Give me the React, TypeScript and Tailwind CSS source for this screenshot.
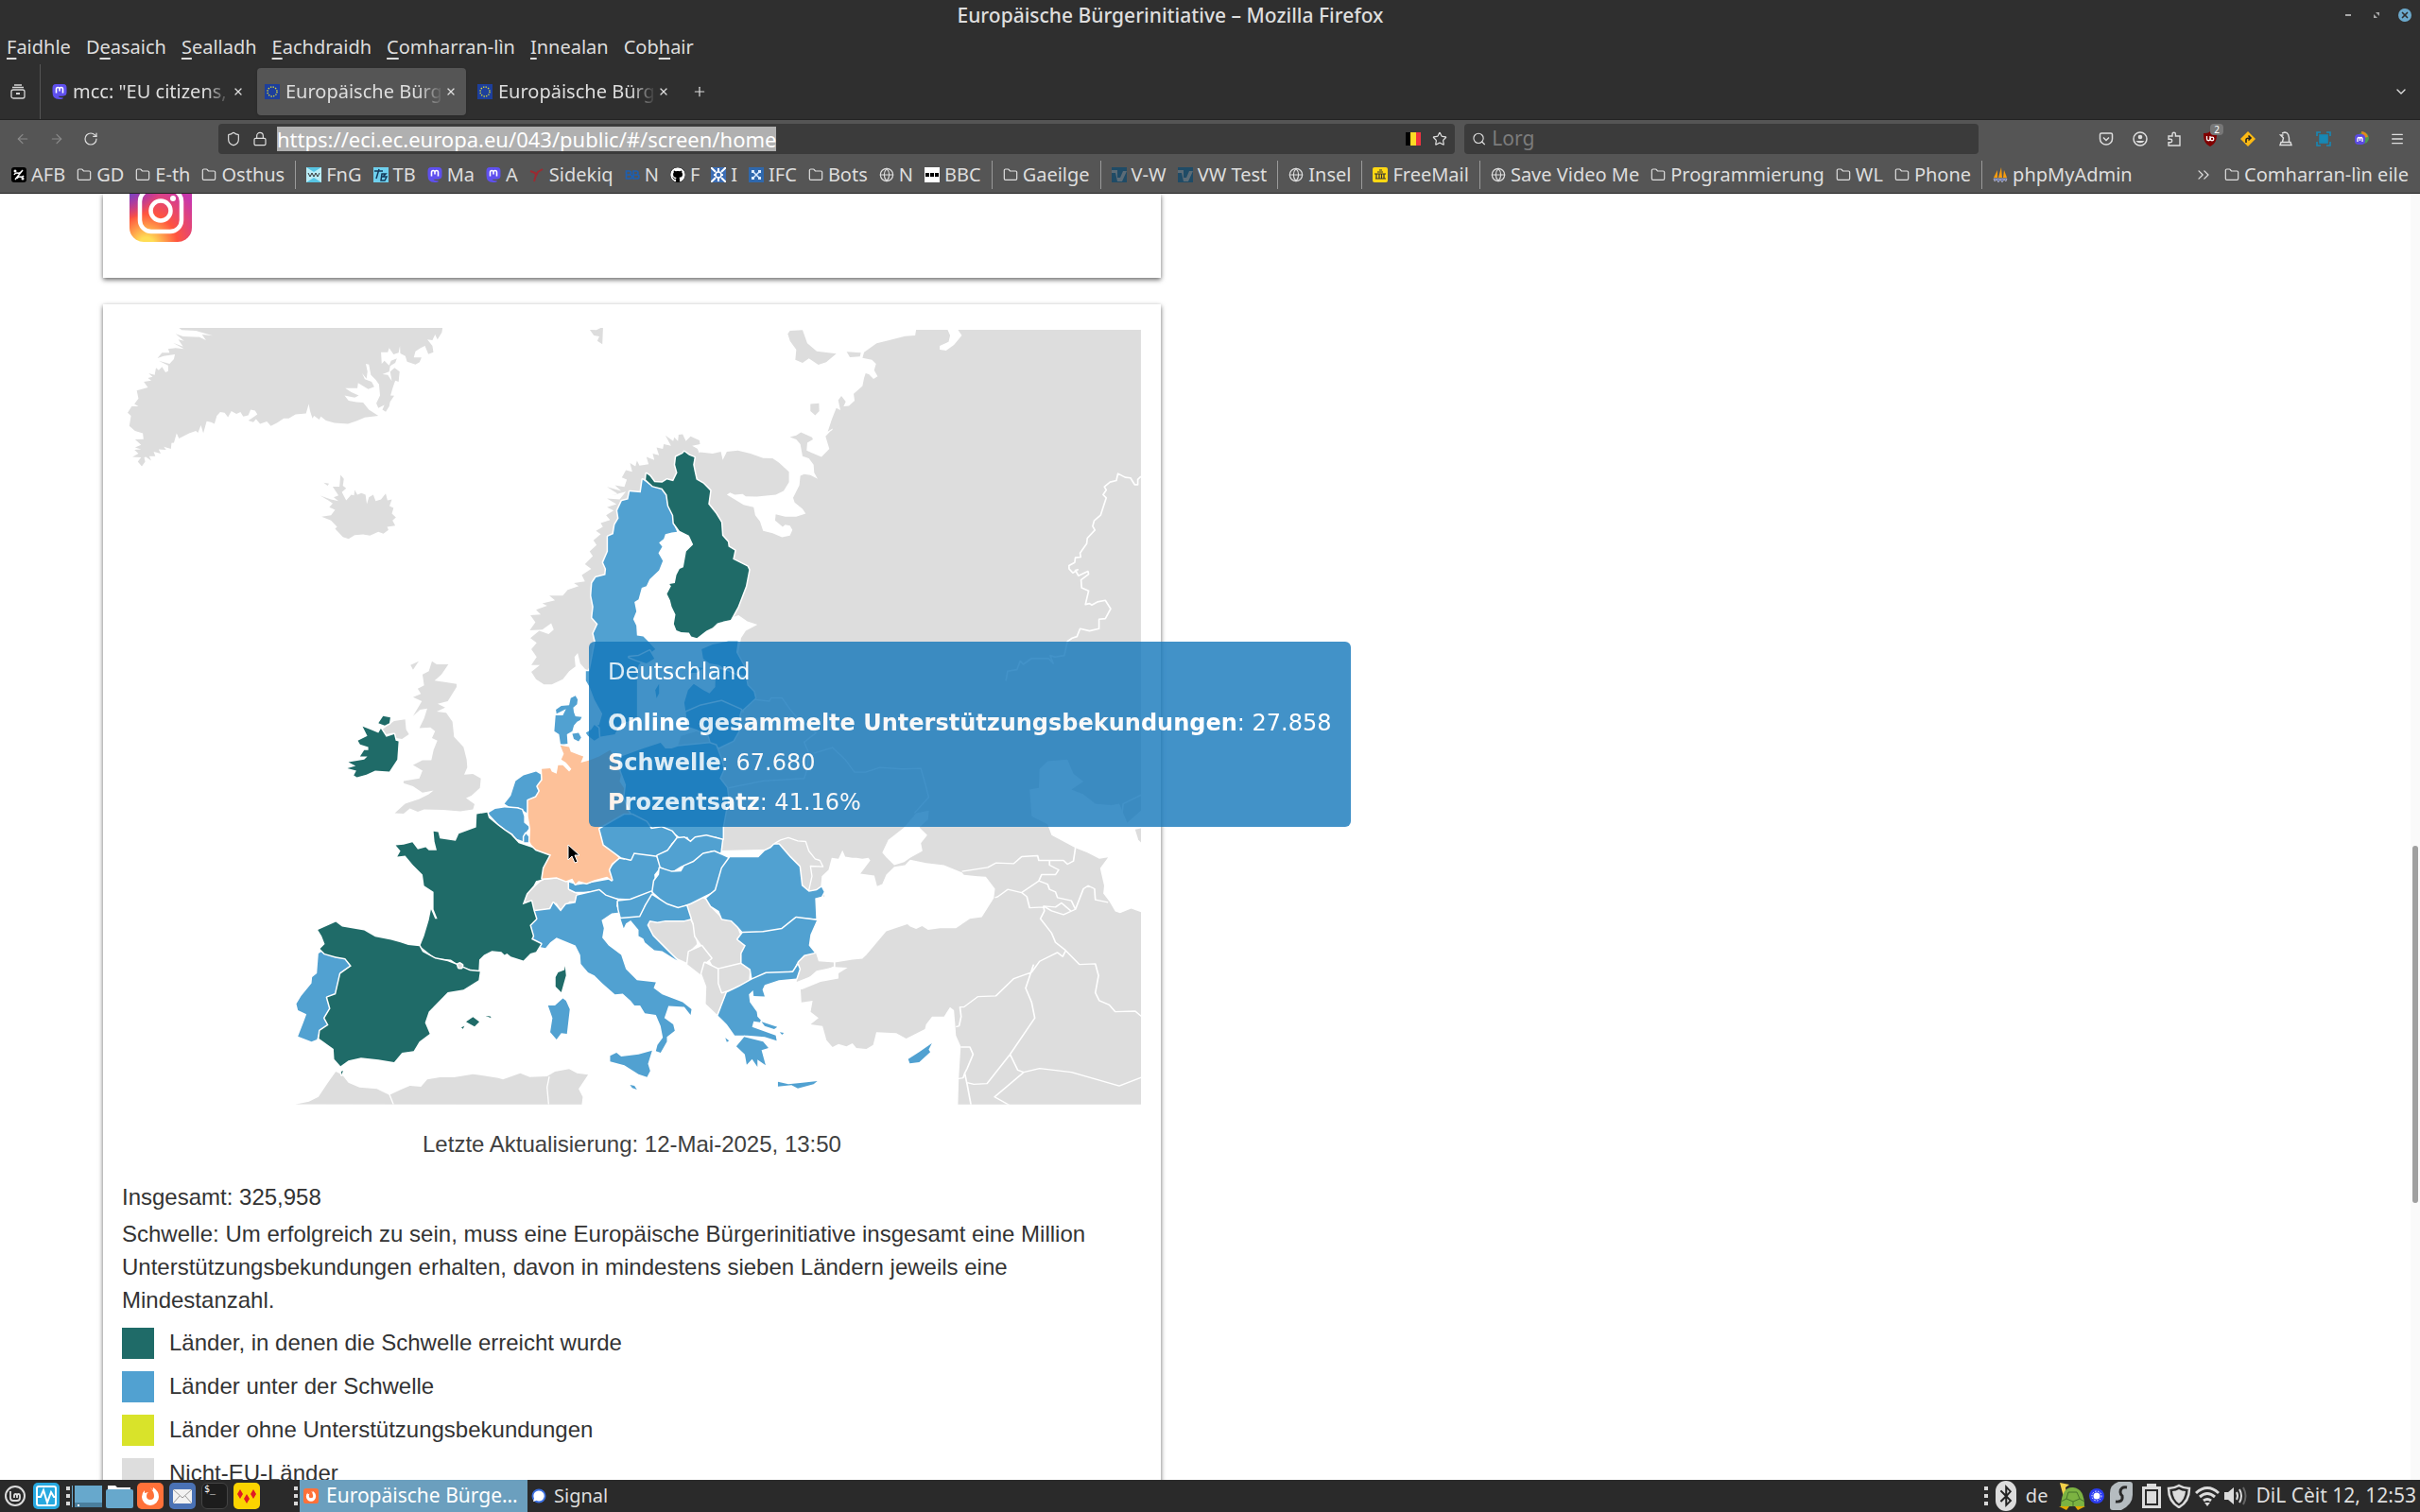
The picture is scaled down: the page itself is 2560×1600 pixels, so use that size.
import React from "react";
import {
    ArrowLeft,
    ArrowRight,
    ChevronDown,
    ChevronsRight,
    Folder,
    Globe,
    Lock,
    Menu,
    Plus,
    RotateCw,
    Search,
    Shield,
    Star,
    X,
} from "lucide-react";
import { FaBluetoothB, FaGithub } from "react-icons/fa";

const menuItems = [
    { before: "", key: "F", after: "aidhle" },
    { before: "D", key: "e", after: "asaich" },
    { before: "", key: "S", after: "ealladh" },
    { before: "", key: "E", after: "achdraidh" },
    { before: "", key: "C", after: "omharran-lìn" },
    { before: "", key: "I", after: "nnealan" },
    { before: "Cob", key: "h", after: "air" },
];

const tabs = [
    { label: 'mcc: "EU citizens, sign', icon: "mastodon", active: false },
    { label: "Europäische Bürgerinitiative", icon: "eu", active: true },
    { label: "Europäische Bürgerinitiative", icon: "eu", active: false },
];

const bookmarkGroups = [
    [
        { label: "AFB", icon: "afb" },
        { label: "GD", icon: "folder" },
        { label: "E-th", icon: "folder" },
        { label: "Osthus", icon: "folder" },
    ],
    [
        { label: "FnG", icon: "fng" },
        { label: "TB", icon: "tb" },
        { label: "Ma", icon: "mastodon" },
        { label: "A", icon: "mastodon" },
        { label: "Sidekiq", icon: "sidekiq" },
        { label: "N", icon: "nb" },
        { label: "F", icon: "github" },
        { label: "I", icon: "knot" },
        { label: "IFC", icon: "ifc" },
        { label: "Bots", icon: "folder" },
        { label: "N", icon: "globe" },
        { label: "BBC", icon: "bbc" },
    ],
    [{ label: "Gaeilge", icon: "folder" }],
    [
        { label: "V-W", icon: "vw" },
        { label: "VW Test", icon: "vw" },
    ],
    [{ label: "Insel", icon: "globe" }],
    [{ label: "FreeMail", icon: "freemail" }],
    [
        { label: "Save Video Me", icon: "globe" },
        { label: "Programmierung", icon: "folder" },
        { label: "WL", icon: "folder" },
        { label: "Phone", icon: "folder" },
    ],
    [{ label: "phpMyAdmin", icon: "php" }],
];

const legend = [
    { label: "Länder, in denen die Schwelle erreicht wurde", color: "bg-[#1f6b68]" },
    { label: "Länder unter der Schwelle", color: "bg-[#51a1d1]" },
    { label: "Länder ohne Unterstützungsbekundungen", color: "bg-[#d9e32a]" },
    { label: "Nicht-EU-Länder", color: "bg-[#dddddd]" },
];

const SiteIcon = ({ name }: { name: string }): React.JSX.Element => {
    if (name === "folder") return <Folder className="size-4 shrink-0" strokeWidth={1.8} />;
    if (name === "globe") return <Globe className="size-4 shrink-0" strokeWidth={1.8} />;
    if (name === "github") return <FaGithub className="size-4 shrink-0 rounded-full bg-black text-white" />;
    return (
        <svg viewBox="0 0 16 16" className="size-4 shrink-0" aria-hidden="true">
            {name === "mastodon" && (
                <>
                    <path d="M4 0h8q3.500 0 3.500 4v5q0 3-3 3.500-3 .5-6 .2 1 2 5 1.300v1.500Q5 17 2 14 .5 12 .5 8V4Q.5 0 4 0z" fill="#5f50ee" />
                    <path d="M4.500 9.500V5.500Q4.500 3.500 6.200 3.500T8 5.500V7.500M8 5.500Q8 3.500 9.800 3.500t1.700 2v4" stroke="#fff" strokeWidth="1.600" fill="none" />
                </>
            )}
            {name === "eu" && (
                <>
                    <rect width="16" height="16" fill="#1d3f9c" />
                    <circle cx="8" cy="8" r="5" fill="none" stroke="#d8d53a" strokeWidth="1.400" strokeDasharray="1.300 1.320" />
                </>
            )}
            {name === "afb" && (
                <>
                    <rect width="16" height="16" rx="3" fill="#000" />
                    <path d="M4 13L12 3M3 8c2-4 5 0 7-3M6 12c2-4 5 0 7-3" stroke="#fff" strokeWidth="1.500" fill="none" />
                    <circle cx="4" cy="4" r="1.500" fill="#fff" />
                    <circle cx="12" cy="12" r="1.500" fill="#fff" />
                </>
            )}
            {name === "fng" && (
                <>
                    <rect width="16" height="16" fill="#b9ecf6" />
                    <path d="M0 0h16L8 5zM0 16h16l-8-5z" fill="#57c4e2" />
                    <path d="M2 6l2 4 2-4 2 4 2-4 2 4 2-4" stroke="#333" fill="none" />
                </>
            )}
            {name === "tb" && (
                <>
                    <rect width="16" height="16" fill="#6fd0ee" />
                    <path d="M1 4h9M6 2L3 12M9 7h4l-3 3h4l-2 4H8z" stroke="#153a5a" strokeWidth="1.500" fill="none" />
                </>
            )}
            {name === "sidekiq" && (
                <path d="M1 4l5 2 1 3 2-4 5-3M7 8l-2 7" stroke="#9c2b32" strokeWidth="2" fill="none" />
            )}
            {name === "nb" && (
                <path d="M1.500 4h3a2 2 0 010 4h-3zm0 4h4a2 2 0 010 4h-4zM9 4h3a2 2 0 010 4H9zm0 4h4a2 2 0 010 4H9z" stroke="#1f5fae" strokeWidth="1.700" fill="none" />
            )}
            {name === "knot" && (
                <>
                    <rect width="16" height="16" fill="#3b6db5" />
                    <path d="M0 0l5 5M16 0l-5 5M0 16l5-5M16 16l-5-5M3 8h10M8 1v4M8 11v4" stroke="#fff" strokeWidth="2" />
                    <circle cx="8" cy="8" r="3" fill="#3b6db5" stroke="#fff" strokeWidth="1.500" />
                </>
            )}
            {name === "ifc" && (
                <>
                    <rect width="16" height="16" fill="#2f68ad" />
                    <path d="M4 4l8 8M12 4l-8 8" stroke="#dcebff" strokeWidth="1.500" />
                    <path d="M3 3h3v3H3zM10 3h3v3h-3zM3 10h3v3H3zM10 10h3v3h-3z" fill="#dcebff" />
                </>
            )}
            {name === "bbc" && (
                <>
                    <rect width="16" height="16" fill="#fff" />
                    <path d="M1 6h4v4H1zM6 6h4v4H6zM11 6h4v4h-4z" fill="#000" />
                </>
            )}
            {name === "vw" && (
                <>
                    <rect width="16" height="16" fill="#1f4b66" />
                    <path d="M0 3h6v8h3l3-7h4l-5 11H6L4 6H0z" fill="#5b6b76" />
                </>
            )}
            {name === "freemail" && (
                <>
                    <rect width="16" height="16" rx="2" fill="#ffd813" />
                    <path d="M2 7h12M3 12h11M4 7v5M7 7v5M9.500 7v5M12 7v5M5 5h6M7 3h3" stroke="#333" strokeWidth="1.200" />
                </>
            )}
            {name === "php" && (
                <>
                    <path d="M1 11L5 3v8zM6 11L9 0l1 11zM11 11l1-8 3 8z" fill="#f89c0e" />
                    <path d="M1 12h14l-1 3-2-2-2 3-2-3-2 3-2-3-2 2z" fill="#6c78af" stroke="#d8d8e8" strokeWidth=".5" />
                </>
            )}
        </svg>
    );
};

const TitleBar = (): React.JSX.Element => (
    <div className="flex h-8 items-center pr-2">
        <h1 className="flex-1 text-center text-[21px] leading-8 font-medium text-[#dedede]">
            Europäische Bürgerinitiative – Mozilla Firefox
        </h1>
        <div className="flex items-center gap-3.5 text-[#a8a8a8]">
            <button aria-label="Minimise" className="flex size-4 items-center justify-center">
                <span className="h-0.5 w-1.5 bg-[#a8a8a8]" />
            </button>
            <button aria-label="Restore" className="flex size-4 items-center justify-center">
                <svg viewBox="0 0 8 8" className="size-2">
                    <path d="M3 1h4v4zM1 3v4h4z" fill="currentColor" />
                </svg>
            </button>
            <button aria-label="Close" className="flex size-4 items-center justify-center">
                <span className="flex size-3.5 items-center justify-center rounded-full bg-[#6ba9cc]">
                    <X className="size-2.5 text-[#2f2f2f]" strokeWidth={4} />
                </span>
            </button>
        </div>
    </div>
);

const TabStrip = (): React.JSX.Element => (
    <div className="flex h-[58px] items-center gap-1">
        <button aria-label="Recent browsing" className="flex w-[42px] justify-center pr-1">
            <svg viewBox="0 0 16 16" className="size-4" fill="none" stroke="#d6d6d6" strokeWidth="1.300">
                <path d="M4 1h8M2 3.500h12" />
                <rect x="1" y="6" width="14" height="9" rx="2" />
                <path d="M6 10h4" strokeWidth="2" />
            </svg>
        </button>
        <span className="-ml-1 h-full w-px bg-[#555]" />
        {tabs.map((tab, index) => (
            <div
                key={index}
                className={
                    tab.active
                        ? "flex h-[50px] w-[221px] items-center rounded bg-[#555] px-2 shadow"
                        : "flex h-[50px] w-[221px] items-center rounded px-2"
                }
            >
                <button className="flex min-w-0 flex-1 items-center gap-1.5 text-left">
                    <SiteIcon name={tab.icon} />
                    <span className="min-w-0 flex-1 overflow-hidden text-[20px] whitespace-nowrap [mask-image:linear-gradient(to_right,black_84%,transparent)]">
                        {tab.label}
                    </span>
                </button>
                <button aria-label="Close tab" className="flex size-4 items-center justify-center">
                    <X className="size-3" strokeWidth={2.5} />
                </button>
            </div>
        ))}
        <button aria-label="New tab" className="ml-2.5">
            <Plus className="size-4" strokeWidth={1.8} />
        </button>
        <button aria-label="List all tabs" className="mr-3 ml-auto">
            <ChevronDown className="size-4" strokeWidth={2} />
        </button>
    </div>
);

const NavBar = (): React.JSX.Element => (
    <div className="flex h-10 items-center">
        <div className="flex w-[231px] items-center gap-5 pl-4">
            <button aria-label="Back" className="text-[#8a8a8a]">
                <ArrowLeft className="size-4" strokeWidth={1.8} />
            </button>
            <button aria-label="Forward" className="text-[#8a8a8a]">
                <ArrowRight className="size-4" strokeWidth={1.8} />
            </button>
            <button aria-label="Reload">
                <RotateCw className="size-4" strokeWidth={1.8} />
            </button>
        </div>
        <div className="flex h-8 flex-[1292] items-center rounded bg-[#3b3b3b] px-2">
            <Shield className="mr-3 size-4" strokeWidth={1.8} />
            <Lock className="mr-2.5 size-4" strokeWidth={1.8} />
            <input
                aria-label="Address"
                readOnly
                value="https://eci.ec.europa.eu/043/public/#/screen/home"
                className="field-sizing-content h-[26px] bg-[#b0b0b0] text-[22px] text-white outline-none"
            />
            <svg viewBox="0 0 16 14" className="ml-auto h-3.5 w-4">
                <rect width="6" height="14" fill="#000" />
                <rect x="5" width="6" height="14" fill="#fdda25" />
                <rect x="11" width="5" height="14" fill="#ef3340" />
            </svg>
            <button aria-label="Bookmark page" className="ml-3">
                <Star className="size-4" strokeWidth={1.8} />
            </button>
        </div>
        <label className="ml-2.5 flex h-8 flex-[528] items-center gap-1.5 rounded bg-[#3b3b3b] px-2">
            <Search className="size-4" strokeWidth={1.8} />
            <input
                aria-label="Search"
                placeholder="Lorg"
                className="w-full bg-transparent text-[21px] outline-none placeholder:text-[#7c7c7c]"
            />
        </label>
        <div className="flex w-[467px] items-center justify-end pr-1.5">
            <button aria-label="Pocket" className="flex w-9 justify-center">
                <svg viewBox="0 0 16 16" className="size-4" fill="none" stroke="currentColor" strokeWidth="1.500">
                    <path d="M3 2h10a1.500 1.500 0 011.500 1.500V8a6.500 6 0 01-13 0V3.500A1.500 1.500 0 013 2z" />
                    <path d="M5 6.500l3 3 3-3" />
                </svg>
            </button>
            <button aria-label="Account" className="flex w-9 justify-center">
                <svg viewBox="0 0 16 16" className="size-4">
                    <circle cx="8" cy="8" r="7" fill="none" stroke="currentColor" strokeWidth="1.500" />
                    <circle cx="8" cy="6" r="2.300" fill="currentColor" />
                    <path d="M3.500 10h9a5 4 0 01-9 0z" fill="currentColor" />
                </svg>
            </button>
            <button aria-label="Extensions" className="flex w-9 justify-center">
                <svg viewBox="0 0 16 16" className="size-4" fill="none" stroke="currentColor" strokeWidth="1.400">
                    <path d="M6 5V3a1.700 1.700 0 013.400 0v2H14v10H2v-3.300h2a1.700 1.700 0 000-3.400H2V5z" />
                </svg>
            </button>
            <button aria-label="uBlock" className="relative flex w-10 justify-center">
                <svg viewBox="0 0 16 16" className="size-4">
                    <path d="M8 0c2 2 5 2 7 2 0 7-1 11-7 14C2 13 1 9 1 2c2 0 5 0 7-2z" fill="#800000" />
                    <path d="M4.500 5v3a1.700 1.700 0 003.500 0V5" stroke="#fff" strokeWidth="1.300" fill="none" />
                    <circle cx="10" cy="8" r="1.800" stroke="#fff" strokeWidth="1.300" fill="none" />
                </svg>
                <span className="absolute -top-2 right-1.5 rounded-sm bg-[#777] px-1 text-[10px] leading-3 text-white">2</span>
            </button>
            <button aria-label="Redirector" className="flex w-10 justify-center">
                <svg viewBox="0 0 16 16" className="size-4">
                    <path d="M8 0l8 8-8 8-8-8z" fill="#fdb913" />
                    <path d="M6 12V9q0-2 4-2M8.500 4.500L11 7 8.500 9.500" stroke="#222" strokeWidth="1.600" fill="none" />
                </svg>
            </button>
            <button aria-label="Chess" className="flex w-10 justify-center">
                <svg viewBox="0 0 16 16" className="size-4" fill="none" stroke="currentColor" strokeWidth="1.400">
                    <path d="M2 14.500h12l-1-3H3zM4.500 11l1-4-3-3h3M4 2l3-1q5 0 4.500 10" />
                </svg>
            </button>
            <button aria-label="Screenshot" className="flex w-10 justify-center">
                <svg viewBox="0 0 16 16" className="size-4" fill="none" stroke="#1788b5" strokeWidth="1.600">
                    <path d="M1 5V1h4M11 1h4v4M15 11v4h-4M5 15H1v-4" />
                    <rect x="4" y="4" width="8" height="8" fill="#1788b5" />
                </svg>
            </button>
            <button aria-label="Mastodon" className="flex w-10 justify-center">
                <svg viewBox="0 0 16 16" className="size-4">
                    <circle cx="10" cy="7" r="6" fill="#4c9a4f" />
                    <path d="M8 0a7 7 0 017 6L9 7z" fill="#e08a1c" />
                    <rect x="1" y="3" width="11" height="11" rx="4" fill="#5b4be0" />
                    <path d="M4 11V7.500q1-2 2.500 0V10m0-2.500q1.500-2 2.500 0V11" stroke="#fff" strokeWidth="1.300" fill="none" />
                </svg>
            </button>
            <button aria-label="Menu" className="flex w-9 justify-center">
                <Menu className="size-4" strokeWidth={2} />
            </button>
        </div>
    </div>
);

const BookmarksBar = (): React.JSX.Element => (
    <div className="flex h-[37px] items-center pr-3 pb-0.5 pl-3 text-[20px] whitespace-nowrap">
        {bookmarkGroups.map((group, index) => (
            <React.Fragment key={index}>
                {index > 0 && <span className="mx-[11px] h-[30px] w-px shrink-0 bg-[#9a9a9a]" />}
                <div className="flex items-center gap-3">
                    {group.map((item, i) => (
                        <a key={i} href="#bookmark" className="flex items-center gap-[5px]">
                            <SiteIcon name={item.icon} />
                            {item.label}
                        </a>
                    ))}
                </div>
            </React.Fragment>
        ))}
        <button aria-label="More bookmarks" className="mr-3 ml-auto">
            <ChevronsRight className="size-5" strokeWidth={1.5} />
        </button>
        <a href="#bookmark" className="flex items-center gap-[5px]">
            <SiteIcon name="folder" />
            Comharran-lìn eile
        </a>
    </div>
);

// Countries, grouped by the map sheet they were traced on.
const sheetNorthWest = [
    "M250 441L1030 441L1028 455L1015 478L1008 462L1000 480L985 478L1000 498L1003 518L988 524L978 498L965 505L950 515L945 535L968 535L962 550L950 557L925 548L920 530L905 522L904 498L900 520L885 525L872 505L868 518L848 518L850 555L858 545L872 560L878 545L895 538L890 552L875 562L872 580L852 588L868 590L880 610L875 580L888 568L903 580L900 612L890 608L883 630L876 655L887 656L875 675L872 690L862 707L852 700L858 685L840 695L834 680L845 655L842 620L832 605L818 590L812 557L803 555L808 580L805 602L792 585L800 604L820 612L828 628L810 635L780 616L778 632L742 632L760 645L782 655L770 662L740 655L752 672L775 676L795 678L812 700L840 720L800 725L775 736L750 745L710 742L685 735L670 722L665 732L650 720L645 728L638 705L634 682L626 712L595 715L575 728L560 728L540 742L522 752L510 738L490 745L478 730L470 740L455 735L465 728L482 715L475 703L462 700L455 718L440 722L432 708L420 714L405 705L395 724L385 710L372 708L362 720L355 745L345 740L332 737L328 752L322 775L315 750L306 774L300 768L280 775L250 792L243 775L235 805L228 806L226 825L205 818L212 828L190 826L196 840L175 834L180 848L162 848L168 862L152 850L147 852L150 865L140 880L128 865L138 852L112 850L130 840L118 828L138 826L120 820L138 812L120 795L145 794L143 775L120 768L103 752L108 720L98 710L110 690L130 690L118 682L130 665L125 640L158 630L146 612L168 608L158 600L172 596L160 585L178 590L182 568L190 575L200 565L210 582L218 578L218 560L190 545L222 555L235 540L238 525L205 530L186 537L200 520L222 520L218 508L240 505L265 508L232 488L262 500L248 478L265 482L240 460L262 468L310 470L290 460L330 480L318 462L350 466L300 450L258 448Z",
    "M668 973L700 985L722 990L708 978L722 972L705 945L725 945L728 907L738 920L735 942L745 950L732 962L745 988L760 970L768 972L770 955L778 970L790 965L802 970L806 1000L812 978L825 970L832 990L848 985L855 975L862 966L867 988L880 985L873 1006L885 1012L880 1030L892 1042L882 1052L890 1068L866 1072L870 1082L855 1094L840 1088L815 1100L795 1096L770 1098L752 1110L735 1104L712 1078L718 1072L700 1052L672 1040L700 1035L712 1018L695 1010L705 998L692 988Z",
    "M1466 447L1485 448L1498 441L1505 441L1503 493L1488 482L1494 468L1478 465Z",
    "M678 932L694 935L690 942Z",
];

const sheetRussia = [
    "M300 400L285 410L298 370L312 335L325 342L318 310L328 297L342 315L335 330L352 328L370 312L367 290L395 265L400 240L405 225L415 228L430 243L443 235L432 215L438 195L425 182L395 176L400 158L440 130L480 120L530 107L562 105L565 87L665 87L673 105L668 125L640 138L640 150L660 153L685 135L710 105L698 87L1278 87L1278 1400L300 1400Z",
    "M165 90L205 88L220 130L250 155L312 163L280 190L255 198L225 178L205 192L182 182L185 150L165 122L158 100Z",
    "M345 157L390 160L387 172L355 174Z",
    "M230 322L257 320L258 345L245 358L230 345Z",
];

const sheetNordicGrey = [
    "M600 175L640 180L666 174L672 200L685 174L720 170L760 180L800 194L830 195L850 208L882 237L882 270L865 298L840 310L780 316L745 315L735 308L710 310L695 303L685 310L710 325L738 342L770 350L775 375L790 395L800 425L830 432L860 445L885 440L893 422L885 408L870 405L862 412L838 392L840 372L870 380L905 380L935 370L925 355L900 335L895 320L915 280L918 250L930 245L950 248L973 260L962 240L960 215L945 195L925 188L918 150L905 135L885 127L905 122L920 112L955 128L958 135L940 145L938 170L960 180L985 190L1010 165L998 125L1012 110L1040 90L1040 1400L690 1400L660 1210L700 1050L740 1000L715 850L730 765L745 742L782 722L750 712L722 692L700 700L620 300L580 240L582 190Z",
    "M592 165L575 155L600 150L598 138L570 125L555 140L545 118L532 120L530 140L518 128L515 140L490 122L508 155L485 150L482 165L462 160L470 185L450 180L455 200L430 190L437 213L408 218L400 202L395 220L378 210L385 237L365 232L352 255L368 262L360 285L330 280L350 298L305 285L340 308L318 312L365 300L345 325L305 322L335 340L305 350L326 360L302 375L315 390L285 400L292 412L270 425L285 435L262 455L272 470L250 490L260 505L235 530L255 545L225 565L235 585L200 590L215 600L180 612L165 630L122 630L140 645L100 655L115 662L80 675L95 690L62 692L78 715L60 740L100 738L128 718L136 738L120 752L90 742L62 765L82 780L65 800L82 825L65 850L92 850L65 872L80 895L105 912L130 912L165 895L185 870L205 855L202 825L212 812L220 845L235 862L245 868L268 790L300 700L300 560L350 350L420 300L540 280L600 240L580 200L600 185Z",
    "M540 1075L590 1060L628 1075L630 1100L530 1105Z",
];

const sheetNordicBlue = [
    "M418 262L440 278L478 290L493 310L495 335L513 372L517 405L527 428L510 430L490 435L485 450L470 462L480 475L468 495L482 520L470 550L440 578L430 600L415 605L405 642L392 650L398 680L388 705L398 725L400 757L420 760L435 775L458 800L430 822L405 850L400 880L400 960L400 1020L370 1030L345 1040L330 1070L280 1078L265 1045L280 1040L290 1005L265 960L250 920L238 900L238 870L250 870L268 775L262 750L276 720L258 700L262 665L255 630L258 590L270 572L300 565L302 545L293 525L308 490L308 443L325 435L330 405L342 385L338 360L352 330L372 325L377 300L412 303Z",
    "M720 775L690 775L640 785L605 800L610 830L630 845L660 850L700 878L745 890L748 870L715 810Z",
    "M580 910L562 930L550 970L555 1000L595 980L665 970L735 992L775 955L770 935L750 915L745 890L720 885L690 870L650 860L648 920L630 940L610 930Z",
    "M555 1000L600 980L668 965L730 992L725 1010L722 1060L705 1090L660 1112L635 1100L628 1075L590 1055L560 1045Z",
    "M470 910L458 930L462 955L470 940Z",
    "M580 855L610 860L590 875L570 875Z",
    "M375 825L405 822L440 805L455 830L430 845L400 835Z",
];

const finland =
    "M550 174L565 185L582 192L578 215L582 235L588 262L610 275L632 297L626 340L650 370L667 398L670 440L688 460L690 475L710 487L704 515L750 538L755 548L745 600L720 665L697 707L675 712L655 718L640 732L620 742L590 765L572 760L565 748L540 746L525 740L517 720L522 690L510 665L505 645L495 625L508 600L503 593L520 590L525 565L535 545L547 540L556 490L578 468L565 440L550 432L535 425L517 400L515 375L500 345L495 310L480 290L450 282L428 262L430 243L440 250L455 270L480 272L495 262L515 267L528 240L521 215L524 190L545 180Z";

const sheetWestGrey = [
    "M312 335L350 308L385 303L388 335L397 350L375 365L355 362L345 345L325 350Z",
    "M470 118L485 128L522 128L500 160L478 180L515 185L548 190L548 200L520 245L488 253L512 265L485 278L515 282L535 310L540 358L570 390L580 430L582 455L572 478L600 476L625 490L622 520L595 545L578 552L605 572L600 588L560 594L505 590L445 588L425 596L400 585L380 602L352 600L385 570L430 555L460 540L475 528L440 535L410 515L380 505L380 498L430 490L440 465L410 447L440 432L468 432L475 400L487 370L470 362L480 340L465 328L430 330L445 300L455 268L432 272L410 292L438 245L410 232L435 222L425 205L445 195L440 160L460 150Z",
    "M402 130L428 118L410 145Z",
    "M760 880L770 858L795 835L820 812L865 808L900 818L905 845L935 858L925 880L905 880L895 898L880 908L865 885L850 890L840 905L795 910L785 882Z",
    "M36 1524L80 1515L110 1500L140 1455L165 1420L185 1430L205 1455L240 1470L295 1475L335 1494L370 1478L400 1465L435 1468L455 1445L495 1438L540 1438L600 1428L680 1440L695 1445L750 1425L780 1437L835 1435L860 1420L905 1412L930 1425L965 1430L935 1475L948 1500L945 1525Z",
];

const sheetWestGreen = [
    "M612 603L645 598L650 615L680 640L700 655L720 668L745 695L790 710L845 733L828 770L820 810L800 815L792 830L770 855L757 890L785 880L792 910L800 935L780 955L790 990L785 1000L815 1015L800 1040L782 1045L760 1068L720 1055L708 1045L700 1050L690 1040L660 1037L635 1050L620 1065L618 1100L595 1098L560 1085L530 1065L480 1060L432 1022L445 990L460 940L467 905L480 935L487 935L475 905L475 850L445 830L440 795L410 765L385 735L360 738L370 720L355 702L380 700L408 692L425 715L450 708L460 718L485 718L478 690L475 658L490 660L495 680L545 688L555 665L610 645Z",
    "M108 970L165 945L185 960L255 972L290 992L340 1002L370 1010L395 1018L430 1022L440 1040L480 1062L520 1070L545 1080L590 1100L622 1103L618 1130L570 1160L520 1168L460 1230L448 1265L463 1300L430 1325L412 1355L375 1360L350 1390L300 1382L245 1376L205 1385L180 1403L160 1380L158 1348L112 1315L115 1290L142 1272L130 1250L148 1220L138 1185L165 1175L180 1110L215 1085L195 1060L165 1055L130 1045L115 1030L130 1015L120 990Z",
    "M892 1085L895 1115L880 1168L862 1150L862 1120L870 1105L890 1098Z",
    "M578 1262L600 1247L620 1262L605 1277Z",
    "M640 1243L655 1245L658 1250Z",
    "M563 1280L573 1275L568 1284Z",
    "M250 325L275 335L300 345L308 332L325 358L350 350L355 370L364 372L360 430L335 468L290 465L262 478L232 486L222 480L230 465L202 458L228 450L205 438L255 430L265 420L242 420L255 400L268 400L268 390L242 382L235 370L265 355Z",
    "M315 292L338 297L335 315L320 322L300 315Z",
    "M182 1420L188 1417L184 1430Z",
];

const sheetWestBlue = [
    "M925 228L932 240L930 255L918 265L920 280L925 293L945 295L940 305L930 310L920 322L915 340L898 350L900 380L878 383L873 350L858 340L862 290L885 290L895 270L865 285L863 272L880 260L905 258L910 235Z",
    "M915 348L935 345L943 360L935 372L920 365Z",
    "M985 320L998 330L1000 360L985 370L965 355L958 345L975 335Z",
    "M735 498L760 480L800 468L820 480L818 500L805 515L812 535L800 550L775 560L772 600L745 582L715 580L700 570L720 545Z",
    "M648 600L670 587L700 582L740 585L755 590L762 610L762 630L780 645L765 665L762 690L735 680L725 665L705 665L700 650L680 635Z",
    "M768 665L782 680L780 692L762 692L762 675Z",
    "M905 820L930 828L965 823L1035 810L1030 780L1062 745L1080 748L1110 725L1180 735L1195 770L1175 795L1178 830L1165 855L1140 865L1100 872L1050 870L1015 860L1000 845L950 850L925 850L905 840Z",
    "M790 912L845 905L855 885L878 912L895 890L925 885L930 862L1000 845L1020 862L1058 875L1055 895L1065 915L1040 918L1008 940L1015 965L1010 995L1030 1020L1070 1050L1085 1095L1120 1130L1180 1137L1173 1155L1200 1175L1265 1200L1293 1222L1290 1240L1270 1215L1220 1212L1207 1250L1235 1270L1240 1290L1215 1310L1215 1325L1195 1360L1180 1355L1185 1335L1202 1312L1195 1275L1180 1240L1145 1235L1130 1210L1112 1210L1100 1195L1075 1173L1050 1175L1010 1140L985 1115L965 1105L942 1078L940 1050L925 1020L865 995L845 1010L830 1028L815 1025L815 1012L785 1000L790 985L780 955L800 935Z",
    "M885 1188L895 1195L907 1222L898 1300L880 1298L865 1318L845 1295L852 1250L838 1210L860 1210Z",
    "M1035 1370L1055 1360L1070 1372L1125 1365L1168 1353L1155 1395L1162 1418L1152 1437L1125 1428L1080 1400L1035 1388Z",
    "M1098 1462L1112 1465L1120 1477L1105 1472Z",
    "M110 1045L130 1033L140 1050L200 1060L212 1083L180 1105L175 1145L160 1178L135 1185L148 1215L130 1245L140 1272L112 1295L105 1318L88 1325L45 1308L62 1265L72 1238L45 1225L40 1205L55 1180L88 1140L90 1120L105 1108Z",
];

const germany =
    "M877 385L905 390L910 405L935 415L950 420L942 440L970 432L1000 420L1035 400L1060 440L1070 475L1065 500L1085 530L1085 560L1100 600L1050 630L1000 655L1015 685L1062 742L1040 760L1030 780L1040 812L1025 802L985 812L960 822L935 815L925 825L915 808L895 815L865 803L820 807L825 775L848 732L800 715L785 700L780 690L782 650L775 610L775 560L800 550L812 530L805 515L820 495L818 460L845 458L850 468L865 475L870 448L885 448L905 468L912 460L895 440L880 430L888 412Z";

const sheetBalkanBlue = [
    "M285 150L290 120L360 95L415 77L430 95L450 95L470 88L570 78L590 85L605 125L615 160L602 190L625 220L630 260L622 290L612 345L612 382L590 375L575 378L560 370L540 385L525 380L510 392L500 375L480 380L465 368L440 360L430 350L410 345L395 352L385 345L370 325L325 305L315 290L300 250L305 210L290 170Z",
    "M222 350L300 305L325 305L370 328L385 350L418 345L450 358L468 380L450 395L435 420L405 435L330 425L320 447L290 440L235 400Z",
    "M405 435L438 420L468 380L490 378L510 392L525 378L560 372L610 385L605 425L575 420L545 430L520 455L480 468L450 487L415 470Z",
    "M412 475L450 487L480 485L490 468L520 455L550 430L585 422L635 445L610 475L590 545L550 565L510 585L470 600L435 590L390 550L395 515L410 495Z",
    "M280 580L320 575L385 550L395 565L365 590L352 628L290 635L282 605Z",
    "M388 560L435 590L470 602L497 595L510 635L490 640L430 640L405 645L380 640L372 655L390 690L430 730L468 768L420 738L395 735L365 710L360 698L345 690L345 670L320 640L305 650L298 665L288 635L350 630L370 590Z",
    "M635 440L725 440L745 420L765 410L775 400L790 400L825 440L855 470L862 530L885 550L910 545L925 535L933 550L925 565L905 570L908 635L870 632L845 630L800 668L740 675L680 683L660 660L640 640L610 635L600 610L575 595L560 570L590 545L610 475Z",
    "M675 680L740 678L800 668L845 632L910 640L890 685L885 720L903 742L870 750L850 770L835 800L800 805L750 808L705 825L700 795L672 775L672 745L685 720L660 700Z",
    "M597 942L625 870L665 850L705 828L750 808L835 805L850 782L855 795L845 825L790 830L745 845L738 860L745 882L710 880L708 862L695 875L698 900L720 930L722 945L740 965L710 960L705 978L780 1005L783 1022L745 1010L690 1005L650 1005L625 970Z",
    "M680 1010L740 1025L757 1045L735 1052L748 1100L722 1082L722 1105L705 1080L688 1098L682 1065L655 1040Z",
    "M735 962L785 978L775 985L745 975Z",
    "M787 1152L820 1160L865 1155L912 1150L900 1160L850 1173L830 1163L787 1167Z",
    "M1275 1030L1265 1050L1270 1058L1235 1090L1205 1094L1200 1080L1235 1058Z",
    "M793 995L806 997L800 1003Z",
    "M620 1013L632 1022L625 1026Z",
];

const sheetBalkanGrey = [
    "M375 645L405 647L430 638L510 640L520 660L525 690L530 715L510 735L500 775L470 762L430 730L385 680Z",
    "M500 590L545 568L560 575L580 605L605 630L650 640L665 680L685 720L670 745L672 775L605 795L580 785L545 720L525 690L520 650L505 615Z",
    "M505 740L545 722L575 760L550 780L545 815L500 780Z",
    "M555 775L595 795L600 850L622 870L595 940L558 905L560 850L545 810Z",
    "M600 795L670 778L698 795L695 830L660 850L610 868L600 840Z",
];

const eastLand =
    "M-100 -200L966 -200L966 1047L505 1047L507 960L512 860L500 825L498 790L495 745L485 735L470 765L440 765L425 790L422 805L375 835L350 818L300 815L292 855L275 868L250 865L240 850L225 860L205 852L190 862L175 840L165 795L135 790L155 770L135 750L140 715L112 720L110 680L135 660L190 645L195 605L130 640L100 655L105 600L90 560L60 300L30 235L-130 240L-120 100Z";

const eastSeas = [
    "M160 360L163 320L180 300L188 262L205 265L215 238L222 258L240 262L250 262L265 265L280 262L285 270L260 312L295 318L302 352L315 345L325 315L345 290L372 285L385 268L425 278L470 285L515 308L520 316L555 320L575 322L598 360L595 390L565 450L535 455L500 485L460 485L430 490L415 478L400 487L385 480L378 472L325 495L275 570L265 582L240 585L195 594L155 590L148 562L128 545L135 480L150 460L148 380L170 385L168 362Z",
    "M112 680L118 655L150 620L195 608L228 610L205 628L205 645L160 655Z",
    "M370 165L400 120L432 112L430 140L408 165L428 190L412 215L416 240L385 262L370 275L345 285L325 260L315 245L330 205L355 180Z",
    "M710 -20L708 40L685 45L690 130L730 155L740 190L800 230L830 245L860 265L882 260L862 295L872 350L870 375L885 400L900 432L912 437L940 423L966 435L966 110L930 150L910 90L890 95L850 90L820 60L790 45L820 20L795 -5L780 -50L730 -45Z",
];

const eastBorders =
    "M598 388L605 385L630 362L665 372L678 385L685 420L720 418L722 430L712 455L740 500L750 530L775 555L810 600L850 598L858 635L850 690L860 715L885 728L900 750L950 748L966 765M775 558L768 575L755 562L710 590L690 625L645 645L600 700L555 702L520 735L510 735L513 765L508 795L500 798M695 600L675 675L690 720L698 770L636 885L578 978L545 980L528 975M636 885L655 935L670 942L597 1020L635 1047M670 942L710 930L790 942L910 985L966 958M512 862L535 862L543 885L528 930L522 945L528 980L538 1047M522 945L518 960L506 962M515 305L580 292L600 278L645 280L665 258L705 255L708 270L770 270L780 282L795 272L800 230M735 270L735 285L758 300L750 315L715 315L708 335L665 372M708 335L730 345L735 362L750 370L755 388L790 398L800 425L770 442L740 430L720 415L750 418L765 405L790 432M800 425L820 360L832 350L848 360L850 395L882 403M915 140L920 90L966 62";

const EuropeMap = (): React.JSX.Element => (
    <svg viewBox="129 346 1078 823" className="w-full" role="img" aria-label="Europakarte">
        <defs>
            <clipPath id="frame">
                <rect x="129" y="346" width="1077" height="822" />
            </clipPath>
        </defs>
        <g clipPath="url(#frame)" strokeLinejoin="round" style={{ paintOrder: "stroke" }}>
            <g transform="translate(100 200) scale(.3571 .3333)" fill="#ddd">
                {sheetNorthWest.map((d) => <path key={d} d={d} />)}
            </g>
            <g transform="translate(780 320) scale(.3333)" fill="#ddd">
                {sheetRussia.map((d) => <path key={d} d={d} />)}
            </g>
            <g transform="translate(540 420) scale(.3333)" fill="#ddd">
                {sheetNordicGrey.map((d) => <path key={d} d={d} />)}
            </g>
            <g transform="translate(800 820) scale(.4209 .3333)">
                <path d={eastLand} fill="#ddd" />
                <g fill="#fff">
                    {eastSeas.map((d) => <path key={d} d={d} />)}
                </g>
                <path d="M950 172L966 168L966 215L958 205Z" fill="#ddd" />
                <path d="M195 590V612" stroke="#fff" strokeWidth="4" />
                <path d={eastBorders} fill="none" stroke="#fff" strokeWidth="4" />
            </g>
            <path
                transform="translate(780 320) scale(.3333)"
                fill="none"
                stroke="#fff"
                strokeWidth="5"
                d="M1278 552L1268 562L1268 578L1258 578L1245 557L1228 555L1205 543L1200 565L1180 570L1162 585L1168 595L1158 610L1168 620L1150 675L1130 692L1125 710L1132 722L1108 748L1106 765L1085 795L1087 808L1070 810L1068 825L1050 835L1050 845L1062 858L1078 848L1070 850L1080 867L1110 853L1112 862L1088 880L1090 905L1112 915L1102 958L1115 955L1122 960L1140 950L1165 945L1182 972L1165 1003L1145 1005L1145 1035L1115 1042L1085 1035L1075 1060L1060 1065L1045 1075L1035 1120L1005 1125L990 1120L1000 1145L985 1130L930 1130L905 1148L895 1138L885 1165L855 1170L850 1200"
            />
            <g transform="translate(540 420) scale(.3333)" stroke="#fff">
                <path
                    fill="none"
                    strokeWidth="4"
                    d="M775 960L820 965L825 955L860 955L885 990L910 1020L968 1065L930 1095L945 1130L940 1180L930 1210L800 1218L690 1240M960 1130L1020 1112L1060 1150L1090 1190L1125 1190L1170 1175L1240 1180L1300 1178L1315 1230L1325 1270L1280 1320"
                />
                <g fill="#51a1d1" strokeWidth="9">
                    {sheetNordicBlue.map((d) => <path key={d} d={d} />)}
                </g>
                <path d={finland} fill="#1f6b68" strokeWidth="9" />
            </g>
            <g transform="translate(300 660) scale(.3333)" stroke="#fff" strokeWidth="9">
                <g fill="#ddd">
                    {sheetWestGrey.map((d) => <path key={d} d={d} />)}
                </g>
                <path d="M335 1492L348 1524M842 1435L835 1470L840 1524" fill="none" strokeWidth="4" />
                <g fill="#51a1d1">
                    {sheetWestBlue.map((d) => <path key={d} d={d} />)}
                </g>
                <g fill="#1f6b68">
                    {sheetWestGreen.map((d) => <path key={d} d={d} />)}
                </g>
                <path d="M552 1080L558 1077L566 1082L564 1090L555 1090Z" fill="#ddd" />
                <path d={germany} fill="#fdc199" />
            </g>
            <g transform="translate(560 760) scale(.3333)" stroke="#fff" strokeWidth="9">
                <g fill="#ddd">
                    {sheetBalkanGrey.map((d) => <path key={d} d={d} />)}
                </g>
                <g fill="#51a1d1">
                    {sheetBalkanBlue.map((d) => <path key={d} d={d} />)}
                </g>
                <path
                    fill="none"
                    strokeWidth="4"
                    d="M775 397L795 385L820 378L850 388L875 390L885 420L905 445L920 450L930 470L890 468L895 500L885 545"
                />
            </g>
        </g>
    </svg>
);

const Tooltip = (): React.JSX.Element => (
    <div
        role="tooltip"
        className="absolute top-[357px] left-[514px] flex h-[196px] flex-col rounded-md bg-[#1377bb] px-5 pt-[11px] font-['DejaVu_Sans',sans-serif] text-[24px] whitespace-nowrap text-white opacity-80"
    >
        <p className="mb-3 leading-[42px]">Deutschland</p>
        <p className="leading-[42px]">
            <b>Online gesammelte Unterstützungsbekundungen</b>: 27.858
        </p>
        <p className="leading-[42px]">
            <b>Schwelle</b>: 67.680
        </p>
        <p className="leading-[42px]">
            <b>Prozentsatz</b>: 41.16%
        </p>
    </div>
);

const PageContent = (): React.JSX.Element => (
    <main className="relative flex min-h-0 flex-1 overflow-hidden bg-white font-['Liberation_Sans',Arial,sans-serif] text-[24px] text-[#333]">
        <div className="ml-[109px] w-[1119px] max-w-full shrink-0">
            <section className="h-[89px] bg-white px-7 shadow-[0_2px_5px_rgba(0,0,0,0.6)]">
                <a href="#instagram" aria-label="Instagram" className="inline-block">
                    <svg viewBox="0 0 66 66" className="-mt-[15px] size-[66px]">
                        <defs>
                            <radialGradient id="warm" cx=".27" cy="1.05" r="1">
                                <stop offset="0" stopColor="#ffdd55" />
                                <stop offset=".12" stopColor="#ffdd55" />
                                <stop offset=".5" stopColor="#ff543e" />
                                <stop offset="1" stopColor="#c837ab" />
                            </radialGradient>
                            <radialGradient id="cool" cx="-.1" cy=".05" r=".6">
                                <stop offset="0" stopColor="#3771c8" />
                                <stop offset="1" stopColor="#6600ff" stopOpacity="0" />
                            </radialGradient>
                        </defs>
                        <rect width="66" height="66" rx="15" fill="url(#warm)" />
                        <rect width="66" height="66" rx="15" fill="url(#cool)" />
                        <rect x="11" y="11" width="44" height="44" rx="12" fill="none" stroke="#fff" strokeWidth="4.500" />
                        <circle cx="33" cy="33" r="10.500" fill="none" stroke="#fff" strokeWidth="4.500" />
                        <circle cx="46" cy="20" r="3" fill="#fff" />
                    </svg>
                </a>
            </section>

            <section className="relative mt-7 h-[1400px] bg-white px-5 pt-6 shadow-[0_2px_5px_rgba(0,0,0,0.6)]">
                <EuropeMap />
                <Tooltip />
                <svg viewBox="0 0 14 21" className="absolute top-[571px] left-[491px] h-[21px] w-3.5">
                    <path d="M1 1v16l4-4 3 7 3-1-3-7h5z" fill="#000" stroke="#fff" />
                </svg>
                <p className="mt-[23px] text-center leading-9 text-[#404040]">Letzte Aktualisierung: 12-Mai-2025, 13:50</p>
                <p className="mt-5 leading-9">Insgesamt: 325,958</p>
                <p className="mt-[3px] pr-14 leading-[35px]">
                    Schwelle: Um erfolgreich zu sein, muss eine Europäische Bürgerinitiative insgesamt eine Million
                    Unterstützungsbekundungen erhalten, davon in mindestens sieben Ländern jeweils eine Mindestanzahl.
                </p>
                <ul className="mt-3 flex flex-col gap-[13px]">
                    {legend.map((item) => (
                        <li key={item.label} className="flex h-[33px] items-center gap-4">
                            <span className={`h-[33px] w-[34px] ${item.color}`} />
                            {item.label}
                        </li>
                    ))}
                </ul>
            </section>
        </div>
        <div className="ml-auto flex w-2.5 justify-center bg-[#fafafa] pt-[690px]">
            <span className="h-[378px] w-1.5 rounded-full bg-[#a0a0a0]" />
        </div>
    </main>
);

const Grip = (): React.JSX.Element => (
    <span className="flex flex-col gap-1">
        <i className="size-1 bg-[#d8d8d8]" />
        <i className="size-1 bg-[#d8d8d8]" />
        <i className="size-1 bg-[#d8d8d8]" />
    </span>
);

const Taskbar = (): React.JSX.Element => (
    <footer className="flex h-[34px] shrink-0 items-center bg-[#2a2a2a] text-[20px] text-[#dedede]">
        <button aria-label="Start menu" className="ml-[5px]">
            <svg viewBox="0 0 22 22" className="size-[22px]" fill="none" stroke="#dcdcdc" strokeWidth="2">
                <circle cx="11" cy="11" r="10" />
                <path d="M6 6v7q0 3 3 3h4q3 0 3-3v-2q0-2-1.500-2T13 11v2m0-2q0-2-1.500-2T10 11v2" strokeWidth="1.800" />
            </svg>
        </button>
        <button aria-label="System monitor" className="ml-2">
            <svg viewBox="0 0 28 28" className="size-7">
                <rect width="28" height="28" rx="5" fill="#27a9e0" />
                <rect x="4" y="4" width="20" height="20" rx="2" fill="none" stroke="#fff" strokeWidth="2" />
                <path d="M4 15h4l3-7 4 13 4-11 3 5h3" stroke="#fff" strokeWidth="2" fill="none" />
            </svg>
        </button>
        <span className="mr-0.5 ml-[7px]"><Grip /></span>
        <button aria-label="Show desktop" className="border-l border-[#6ba9cc] pl-0.5">
            <svg viewBox="0 0 29 23" className="h-[23px] w-[29px]">
                <rect width="29" height="23" fill="#67a8cc" />
                <rect y="18" width="29" height="5" fill="#4a7f9d" />
                <rect x="3" y="20" width="2" height="2" fill="#fff" />
            </svg>
        </button>
        <button aria-label="Files" className="ml-1">
            <svg viewBox="0 0 29 25" className="h-[25px] w-[29px]">
                <path d="M2 1h8l2 2h14v6H2z" fill="#fff" />
                <rect y="5" width="29" height="20" rx="2" fill="#67a8cc" />
            </svg>
        </button>
        <button aria-label="Firefox" className="ml-1">
            <svg viewBox="0 0 28 28" className="size-7">
                <rect width="28" height="28" rx="5" fill="#ff7139" />
                <path d="M14 5q2 1 2 4 1-2 1-4 6 4 6 10a9 9 0 01-18 0q0-4 3-7v3l4-1q-2 1-2 4a4 4 0 108 0q0-4-4-9z" fill="#fff" />
            </svg>
        </button>
        <button aria-label="Mail" className="ml-1.5">
            <svg viewBox="0 0 28 28" className="size-7">
                <rect width="28" height="28" rx="5" fill="#4a72b5" />
                <rect x="4" y="7" width="20" height="15" rx="1" fill="#f2f2f2" />
                <path d="M4 7l10 9 10-9M4 22l7-8M24 22l-7-8" stroke="#999" fill="none" />
            </svg>
        </button>
        <button aria-label="Terminal" className="ml-1.5 flex size-7 items-start rounded-md border border-[#444] bg-[#1d1d1d] pl-0.5 font-['DejaVu_Sans_Mono',monospace] text-[10px] leading-3 text-white">
            $_
        </button>
        <button aria-label="Game" className="ml-1.5">
            <svg viewBox="0 0 28 28" className="size-7">
                <rect width="28" height="28" rx="5" fill="#fbd400" />
                <path d="M7 7l3 5-3 5-3-5zM14 12l3 5-3 5-3-5zM21 7l3 5-3 5-3-5z" fill="#e01b24" />
            </svg>
        </button>
        <span className="mr-0.5 ml-9"><Grip /></span>
        <button className="flex h-full w-[241px] items-center gap-2 bg-[#6b9fbe] px-1 text-white">
            <svg viewBox="0 0 28 28" className="size-4">
                <rect width="28" height="28" rx="5" fill="#ff7139" />
                <path d="M14 5q2 1 2 4 1-2 1-4 6 4 6 10a9 9 0 01-18 0q0-4 3-7v3l4-1q-2 1-2 4a4 4 0 108 0q0-4-4-9z" fill="#fff" />
            </svg>
            <span className="text-[21px]">Europäische Bürge…</span>
        </button>
        <button className="flex items-center gap-2 px-1">
            <svg viewBox="0 0 16 16" className="size-4">
                <circle cx="8" cy="8" r="7.500" fill="#3b6fe0" />
                <path d="M8 2.500a5.500 5.500 0 11-2.500 10.300L2 14l1-3.500A5.500 5.500 0 018 2.500z" fill="#fff" />
            </svg>
            Signal
        </button>
        <div className="mr-1 ml-auto flex items-center">
            <Grip />
            <span className="ml-2 flex h-8 w-[22px] items-center justify-center rounded-full bg-[#dcdcdc] text-[#222]">
                <FaBluetoothB className="size-6" />
            </span>
            <span className="mx-2.5">de</span>
            <svg viewBox="0 0 32 32" className="mr-0.5 size-8">
                <path d="M3 2l10 2-4 3 1 7-3 3z" fill="#f3d24a" />
                <path d="M2 27l8 4 3-4zM30 27l-8 4-3-4z" fill="#e0a800" />
                <path d="M4 27Q5 6 17 7t12 20z" fill="#7cb342" />
                <path d="M12 12h9l3 7-7 3-7-3zM4 22l6-3M29 22l-5-3M17 22v5" stroke="#46752b" fill="none" />
            </svg>
            <svg viewBox="0 0 16 16" className="size-4">
                <circle cx="8" cy="8" r="8" fill="#2b3cf0" />
                <circle cx="8" cy="8" r="3.500" fill="#fff" />
                <circle cx="8" cy="8" r="5" fill="none" stroke="#fff" strokeDasharray="1.500 1.500" />
            </svg>
            <svg viewBox="0 0 24 30" className="mx-1.5 h-[30px] w-6">
                <path d="M9 0h12q3 0 3 3v11q0 10-12 16H3q-3 0-3-3V12Q0 3 9 0z" fill="#b5bcc0" />
                <path d="M18 6q-7-1-7 5 0 2 2 4 1 7-7 6" stroke="#2a2a2a" strokeWidth="3" fill="none" />
            </svg>
            <svg viewBox="0 0 20 26" className="ml-1 h-[26px] w-5">
                <path d="M5 0h10v3h5v23H0V3h5zM3 6v17h14V6z" fill="#dcdcdc" fillRule="evenodd" />
                <path d="M5 8h10v13H5z" fill="#dcdcdc" />
            </svg>
            <svg viewBox="0 0 26 26" className="ml-1.5 size-[26px]">
                <path d="M13 2q5 3 11 3 0 14-11 20Q2 19 2 5q6 0 11-3z" fill="none" stroke="#dcdcdc" strokeWidth="2.500" />
                <path d="M13 6q3 2 7 2-1 9-7 13-6-4-7-13 4 0 7-2z" fill="#dcdcdc" />
            </svg>
            <svg viewBox="0 0 26 24" className="ml-1 h-6 w-[26px]" fill="none" stroke="#dcdcdc" strokeWidth="3">
                <path d="M1 9q12-11 24 0M5 13q8-7 16 0M9 17q4-3 8 0" />
                <path d="M10 19h6l-3 4z" fill="#dcdcdc" stroke="none" />
            </svg>
            <svg viewBox="0 0 26 24" className="ml-1 h-6 w-[26px]" fill="none" stroke="#dcdcdc" strokeWidth="2">
                <path d="M1 8h4l6-5v18l-6-5H1z" fill="#dcdcdc" stroke="none" />
                <path d="M14 8q2 4 0 8M17 5q4 7 0 14" />
                <path d="M21 3q5 9 0 18" stroke="#666" />
            </svg>
            <time className="ml-2 text-[21px]">DiL Cèit 12, 12:53</time>
        </div>
    </footer>
);

export default function App(): React.JSX.Element {
    return (
        <div className="flex h-screen flex-col overflow-hidden bg-white font-['Noto_Sans',sans-serif] text-[#dedede]">
            <header className="shrink-0">
                <div className="bg-[#2f2f2f]">
                    <TitleBar />
                    <nav className="flex h-9 items-center gap-4 pl-[7px] text-[20px]">
                        {menuItems.map((item) => (
                            <button key={item.after}>
                                {item.before}
                                <span className="underline decoration-2 underline-offset-4">{item.key}</span>
                                {item.after}
                            </button>
                        ))}
                    </nav>
                    <TabStrip />
                </div>
                <div className="border-y border-[#232323] bg-[#555]">
                    <NavBar />
                    <BookmarksBar />
                </div>
            </header>
            <PageContent />
            <Taskbar />
        </div>
    );
}
